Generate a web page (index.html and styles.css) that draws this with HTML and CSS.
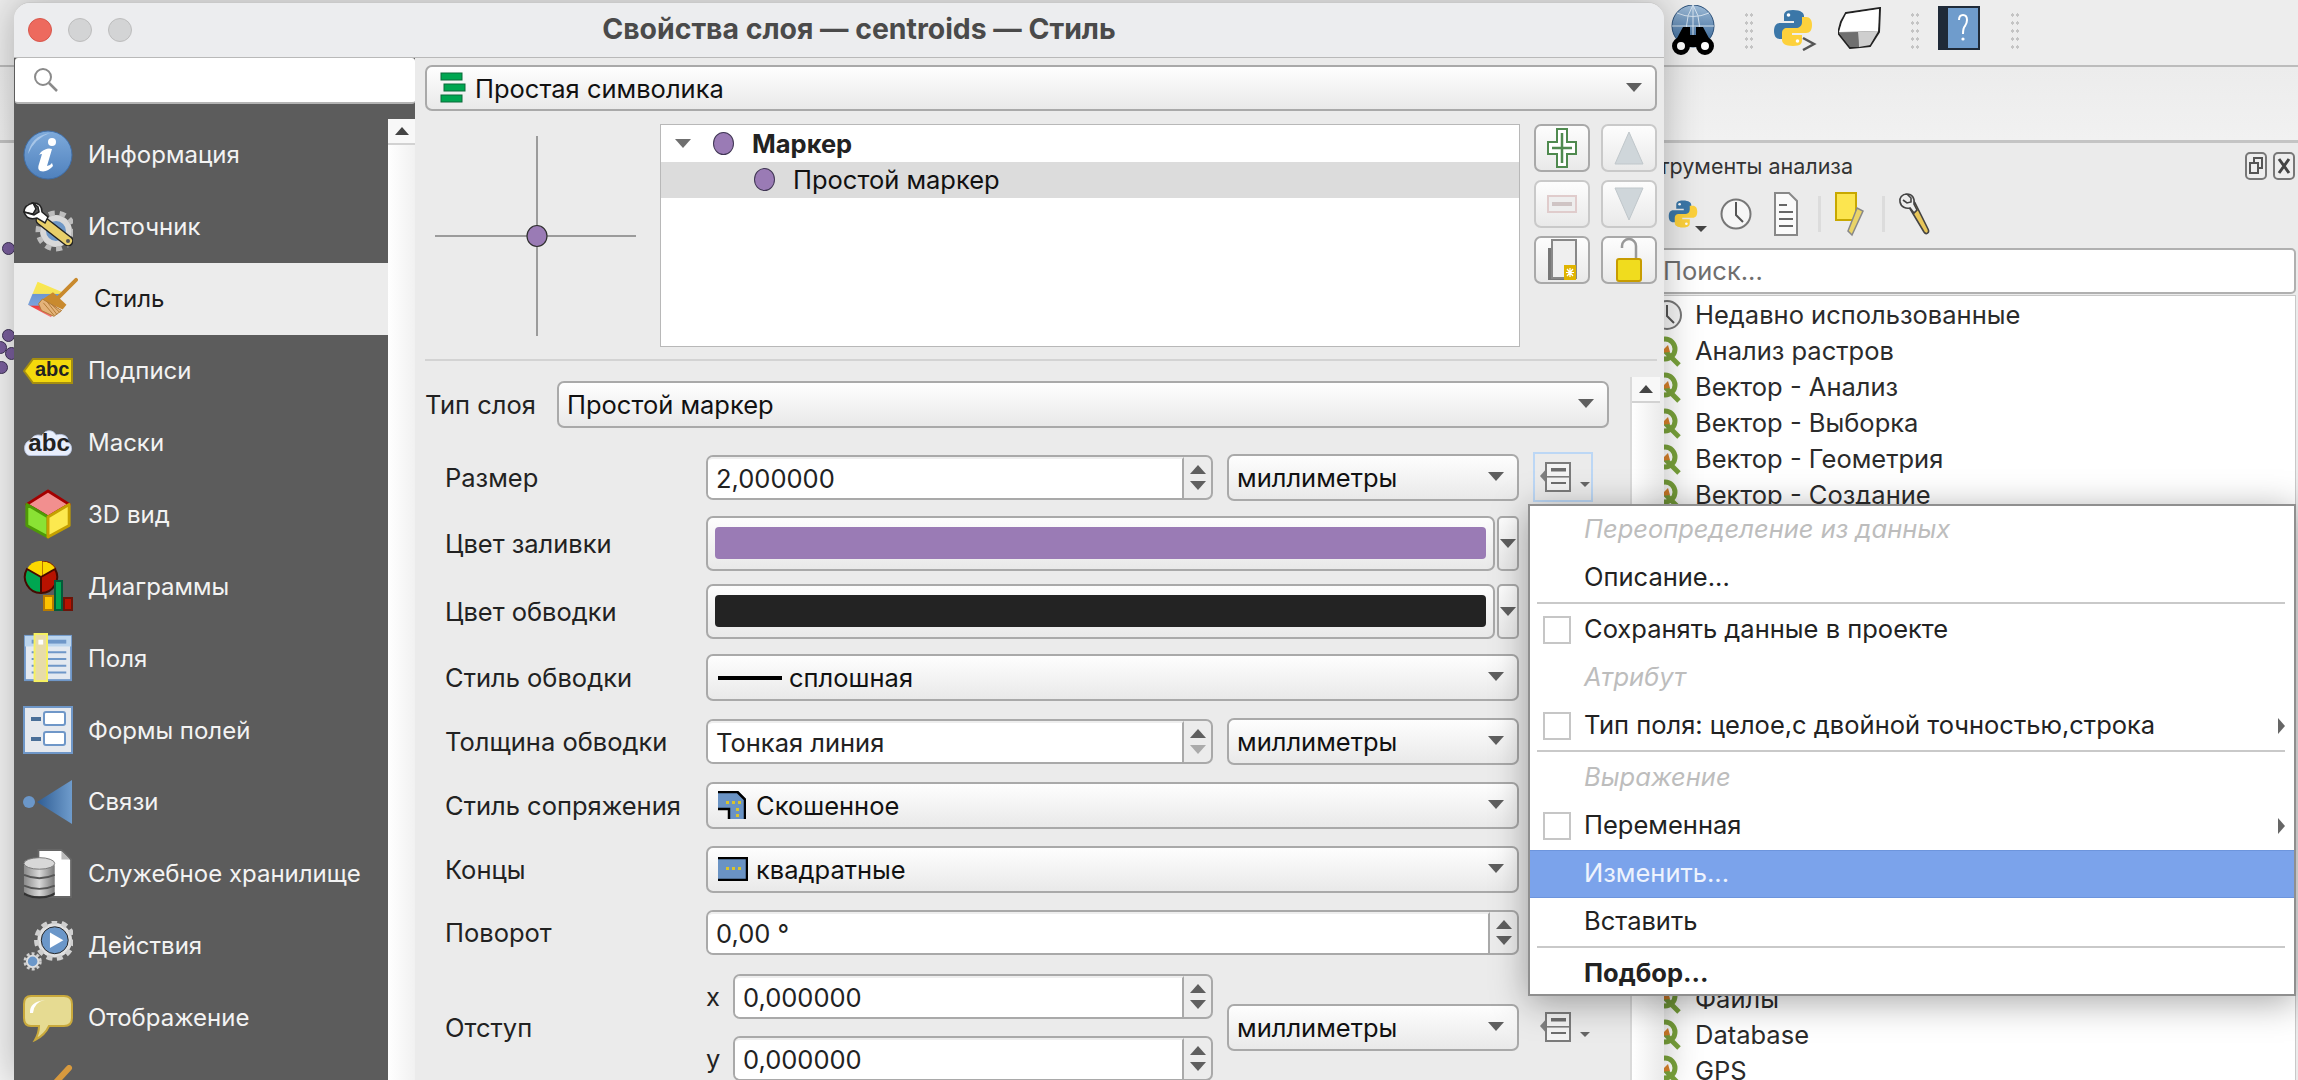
FILE: index.html
```html
<!DOCTYPE html>
<html lang="ru">
<head>
<meta charset="utf-8">
<title>Свойства слоя — centroids — Стиль</title>
<link rel="stylesheet" href="styles.css">
</head>
<body>
<svg class="defs" width="0" height="0">
  <defs>
    <linearGradient id="gInfo" x1="0" y1="0" x2="0" y2="1"><stop offset="0" stop-color="#7eaadb"/><stop offset="1" stop-color="#4f81bd"/></linearGradient>
    <linearGradient id="gFlag" x1="0" y1="0" x2="0" y2="1"><stop offset="0" stop-color="#fbe84a"/><stop offset=".33" stop-color="#f5e45a"/><stop offset=".36" stop-color="#6d97d3"/><stop offset=".66" stop-color="#7aa2da"/><stop offset=".69" stop-color="#ef3a3a"/><stop offset="1" stop-color="#f28080"/></linearGradient>
    <linearGradient id="gLink" x1="0" y1="0" x2="1" y2="0"><stop offset="0" stop-color="#2f5d94"/><stop offset="1" stop-color="#6f9ccc"/></linearGradient>
    <linearGradient id="gDb" x1="0" y1="0" x2="1" y2="0"><stop offset="0" stop-color="#8a8a8a"/><stop offset=".5" stop-color="#d8d8d8"/><stop offset="1" stop-color="#777"/></linearGradient>
    <linearGradient id="gGlobe" x1="0" y1="0" x2="0" y2="1"><stop offset="0" stop-color="#9dbad6"/><stop offset="1" stop-color="#2f5f91"/></linearGradient>
    <symbol id="override" viewBox="0 0 36 32">
      <path d="M9 6 1 15l8 9z" fill="#7f7f7f"/>
      <rect x="7" y="2" width="24" height="28" fill="#f4f4f4" stroke="#7c7c7c" stroke-width="2"/>
      <rect x="12" y="7" width="15" height="3.5" fill="#6e6e6e"/>
      <rect x="7" y="15" width="24" height="1.6" fill="#7c7c7c"/>
      <rect x="12" y="21" width="15" height="2" fill="#6e6e6e"/>
    </symbol>
    <symbol id="qgis" viewBox="0 0 32 32">
      <circle cx="14" cy="14" r="10" fill="none" stroke="#7aa33c" stroke-width="5"/>
      <path d="M13 15 28 30" stroke="#7aa33c" stroke-width="5"/>
      <path d="M9 18 17 10 19 17z" fill="#d9822b"/>
    </symbol>
    <symbol id="python" viewBox="0 0 40 40">
      <path d="M20 2c-8 0-9 3-9 6v5h10v2H7c-4 0-6 3-6 8s2 8 6 8h4v-5c0-4 3-6 6-6h9c3 0 5-2 5-5V8c0-3-3-6-11-6z" fill="#3b77a8"/>
      <path d="M20 38c8 0 9-3 9-6v-5H19v-2h14c4 0 6-3 6-8s-2-8-6-8h-4v5c0 4-3 6-6 6h-9c-3 0-5 2-5 5v7c0 3 3 6 11 6z" fill="#fdd13c"/>
      <circle cx="15.500" cy="7" r="1.800" fill="#fff"/><circle cx="24.500" cy="33" r="1.800" fill="#fff"/>
    </symbol>
  </defs>
</svg>

<div class="app">
  <div class="toolbar-main">
    <svg class="tb-globe" viewBox="0 0 50 50" width="50" height="50"><circle cx="25" cy="21" r="21" fill="url(#gGlobe)" stroke="#2a4f78"/><path d="M25 0v42M4 21h42M9 8q16 7 32 0M9 34q16-7 32 0M25 0q-13 21 0 42M25 0q13 21 0 42" stroke="#d3e0ec" fill="none"/><path d="M15 22h7v8h6v-8h7l8 15v5H7v-5z" fill="#000"/><circle cx="13" cy="41" r="6.500" fill="#fff" stroke="#000" stroke-width="5"/><circle cx="37" cy="41" r="6.500" fill="#fff" stroke="#000" stroke-width="5"/></svg>
    <span class="grip g1"></span>
    <svg class="tb-py" width="44" height="44" viewBox="0 0 44 44"><use href="#python" width="40" height="42"/><path d="M30 31l11 6-11 6" fill="none" stroke="#555" stroke-width="2.500"/></svg>
    <svg class="tb-shape" width="44" height="42" viewBox="0 0 44 42"><path d="M8 6 42 1 41 25 32 39 12 41 0 26 3 15z" fill="#8c8c8c" stroke="#222" stroke-width="2"/><path d="M8 7 41 2 40 24 1 25 4 15z" fill="#fff"/><path d="M20 25 40 24 32 38 21 40z" fill="#cfcfcf"/><path d="M1 26 20 25 21 40 12 40z" fill="#6f6f6f"/></svg>
    <span class="grip g2"></span>
    <svg class="tb-help" width="42" height="44" viewBox="0 0 42 44"><rect x="1" y="1" width="40" height="42" fill="#6f9ccc" stroke="#1f2a38" stroke-width="2"/><rect x="1" y="1" width="9" height="42" fill="#1f2a38"/><path d="M21 14q0-5 4-5t4 5q0 3-2 6-2 2-2 8" fill="none" stroke="#fff" stroke-width="2"/><circle cx="25" cy="33" r="1.600" fill="#fff"/></svg>
    <span class="grip g3"></span>
  </div>
  <div class="toolbar-second"></div>
  <div class="workspace">
    <div class="canvas">
      <span class="dot d1"></span><span class="dot d2"></span><span class="dot d3"></span><span class="dot d4"></span><span class="dot d5"></span>
    </div>
    <aside class="panel">
      <div class="panel-title">
        <span>Инструменты анализа</span>
        <span class="panel-btns">
          <svg width="22" height="28" viewBox="0 0 22 28"><rect x="1" y="1" width="20" height="26" rx="4" fill="#eee" stroke="#777" stroke-width="2"/><rect x="9" y="6" width="8" height="10" fill="none" stroke="#555" stroke-width="2"/><rect x="5" y="11" width="8" height="10" fill="#eee" stroke="#555" stroke-width="2"/></svg>
          <svg width="22" height="28" viewBox="0 0 22 28"><rect x="1" y="1" width="20" height="26" rx="4" fill="#eee" stroke="#777" stroke-width="2"/><path d="M6 7l10 14M16 7 6 21" stroke="#444" stroke-width="3"/></svg>
        </span>
      </div>
      <div class="panel-tools">
        <span class="pt-py"><svg width="30" height="42" viewBox="0 0 40 56"><use href="#python" width="40" height="56"/></svg><i class="tri-small"></i></span>
        <svg width="32" height="46" viewBox="0 0 32 46"><circle cx="16" cy="23" r="14.500" fill="#f6f6f6" stroke="#777" stroke-width="2"/><path d="M16 11v13l7 7" fill="none" stroke="#555" stroke-width="2"/></svg>
        <svg class="ml-8" width="26" height="46" viewBox="0 0 26 46"><path d="M2 2h14l8 8v34H2z" fill="#fafafa" stroke="#888" stroke-width="2"/><path d="M6 14h8M6 21h14M6 28h14M6 35h14" stroke="#666" stroke-width="2"/></svg>
        <i class="pt-sep ml-6"></i>
        <svg class="ml-1" width="30" height="46" viewBox="0 0 30 46"><rect x="1" y="2" width="20" height="27" fill="#fce54f" stroke="#c8a800" stroke-width="2"/><path d="M22 17l6 3-11 24-4-4z" fill="#ead467" stroke="#888" stroke-width="1.500"/></svg>
        <i class="pt-sep ml-4"></i>
        <svg width="32" height="46" viewBox="0 0 32 46"><path d="M11 16 26 41c2 3 6 1 4-3L17 12z" fill="#e8c65a" stroke="#444" stroke-width="1.600"/><path d="M9 3C4 3 1 7 2 11c1 5 6 7 10 6l4 5 3-3-3-6c1-6-2-10-7-10l4 4v4l-4 1-4-3" fill="#eee" stroke="#444" stroke-width="1.600"/></svg>
      </div>
      <div class="panel-search">Поиск...</div>
      <ul class="algo-list">
        <li><svg class="li-ico" width="32" height="32" viewBox="0 0 32 32"><circle cx="16" cy="16" r="14" fill="#f6f6f6" stroke="#777" stroke-width="2"/><path d="M16 6v11l7 7" fill="none" stroke="#555" stroke-width="2"/></svg>Недавно использованные</li>
        <li><svg class="li-ico" width="32" height="32"><use href="#qgis"/></svg>Анализ растров</li>
        <li><svg class="li-ico" width="32" height="32"><use href="#qgis"/></svg>Вектор - Анализ</li>
        <li><svg class="li-ico" width="32" height="32"><use href="#qgis"/></svg>Вектор - Выборка</li>
        <li><svg class="li-ico" width="32" height="32"><use href="#qgis"/></svg>Вектор - Геометрия</li>
        <li><svg class="li-ico" width="32" height="32"><use href="#qgis"/></svg>Вектор - Создание</li>
        <li class="after-menu"><svg class="li-ico" width="32" height="32"><use href="#qgis"/></svg>Файлы</li>
        <li><svg class="li-ico" width="32" height="32"><use href="#qgis"/></svg>Database</li>
        <li><svg class="li-ico" width="32" height="32"><use href="#qgis"/></svg>GPS</li>
      </ul>
    </aside>
  </div>
</div>

<section class="window">
  <header class="titlebar">
    <span class="lights"><i class="light red"></i><i class="light"></i><i class="light"></i></span>
    <h1 class="title">Свойства слоя — centroids — Стиль</h1>
  </header>
  <div class="win-body">
    <nav class="side">
      <div class="side-search"><svg width="26" height="26" viewBox="0 0 26 26"><circle cx="10" cy="10" r="8" fill="none" stroke="#8a8a8a" stroke-width="2"/><path d="M16 16l8 8" stroke="#8a8a8a" stroke-width="2.500"/></svg></div>
      <div class="side-main">
        <ul class="side-list">
          <li class="side-item">
            <svg class="ico" viewBox="0 0 50 50"><circle cx="25" cy="25" r="24" fill="url(#gInfo)" stroke="#3f6da6"/><path d="M5 24Q8 6 27 3 12 8 5 24z" fill="#a8c6e8"/><circle cx="29" cy="12" r="4" fill="#fff"/><path d="M18 22q6-5 11-3l-5 17q3 0 5-3l1 3q-6 7-13 5-3-2-1-7l3-10q-2 0-3 1z" fill="#fff"/></svg>
            <span>Информация</span></li>
          <li class="side-item">
            <svg class="ico" viewBox="0 0 50 50"><circle cx="33" cy="29" r="13" fill="#6d97c7" stroke="#d8d8d8" stroke-width="6"/><circle cx="33" cy="29" r="18" fill="none" stroke="#bdbdbd" stroke-width="5" stroke-dasharray="6 5"/><path d="M18 18 45 39" stroke="#222" stroke-width="11" stroke-linecap="round"/><path d="M18 18 45 39" stroke="#e8cf6a" stroke-width="8" stroke-linecap="round"/><path d="M10 1Q1 3 1 10l9 2 3-5z" fill="#fff" stroke="#222" stroke-width="1.500"/><path d="M1 10q3 9 13 6l8 5 3-6-6-5q0-9-9-9l5 4 1 5-5 3z" fill="#fff" stroke="#222" stroke-width="1.500"/><circle cx="45" cy="39" r="2" fill="#555"/></svg>
            <span>Источник</span></li>
          <li class="side-item active">
            <svg class="ico" viewBox="0 0 52 42"><path d="M10 3 36 14 24 40 0 27z" fill="url(#gFlag)"/><path d="M50 1 31 20" stroke="#c98a2e" stroke-width="4" stroke-linecap="round"/><path d="M26 14 40 27l-4 5L14 22z" fill="#c98a2e"/><path d="M15 21 35 33 27 39 14 33 11 26z" fill="#e4b37a" stroke="#b07a35"/><path d="M16 25 27 38M20 24l10 13M24 26l9 9" stroke="#b07a35"/></svg>
            <span>Стиль</span></li>
          <li class="side-item">
            <svg class="ico ico-wide" viewBox="0 0 50 26"><path d="M10 1H49V25H10L1 13z" fill="#f4d90c" stroke="#a58e10" stroke-width="2"/><text x="12" y="18" class="abc">abc</text></svg>
            <span>Подписи</span></li>
          <li class="side-item">
            <svg class="ico ico-wide" viewBox="0 0 56 32"><path d="M8 30C0 30-1 14 9 13 10 7 18 6 21 8 25 0 34 1 37 7 44 5 52 8 50 15 57 18 55 30 48 30z" fill="#e8eefc" stroke="#b8c5e0"/><text x="6" y="25" class="abc abc-lg">abc</text></svg>
            <span>Маски</span></li>
          <li class="side-item">
            <svg class="ico" viewBox="0 0 50 52"><path d="M25 2 47 16 25 29 3 16z" fill="#f28f8f" stroke="#a40000" stroke-width="3" stroke-linejoin="round"/><path d="M3 16 25 29V50L3 38z" fill="#8ae234" stroke="#4e9a06" stroke-width="3" stroke-linejoin="round"/><path d="M47 16 25 29V50L47 38z" fill="#fce94f" stroke="#c4a000" stroke-width="3" stroke-linejoin="round"/></svg>
            <span>3D вид</span></li>
          <li class="side-item">
            <svg class="ico" viewBox="0 0 50 50"><path d="M19 16V0a16 16 0 0 1 14 8z" fill="#fcd800" stroke="#7a1600"/><path d="M19 17 4 8a16 16 0 0 1 15-8z" fill="#fcd800"/><path d="M18 16 4 8A16 16 0 0 0 18 32z" fill="#00a651" stroke="#450a00" stroke-width="2"/><path d="M18 16 32 8A16 16 0 0 1 18 32z" fill="#b81200" stroke="#450a00" stroke-width="2"/><rect x="21" y="35" width="9" height="14" fill="#fcc200" stroke="#b87a00" stroke-width="2"/><rect x="32" y="20" width="7" height="29" fill="#00a651" stroke="#05593a" stroke-width="2"/><rect x="41" y="37" width="8" height="12" fill="#b81200" stroke="#6c1408" stroke-width="2"/></svg>
            <span>Диаграммы</span></li>
          <li class="side-item">
            <svg class="ico" viewBox="0 0 50 52"><rect x="1" y="3" width="48" height="46" fill="#e4e9f0" stroke="#6f97c8" stroke-width="2"/><rect x="1" y="3" width="48" height="11" fill="#bcd5ee"/><rect x="8" y="7" width="36" height="4" fill="#6f97c8"/><path d="M8 20h36M8 27h36M8 34h36M8 41h36" stroke="#6f97c8" stroke-width="2"/><rect x="11" y="1" width="13" height="49" fill="#e8dca8" stroke="#f6f15e" stroke-width="2"/><rect x="15" y="7" width="5" height="5" fill="#fff"/></svg>
            <span>Поля</span></li>
          <li class="side-item">
            <svg class="ico" viewBox="0 0 50 50"><rect x="1" y="2" width="48" height="46" fill="#e6e9ee" stroke="#6f97c8" stroke-width="2"/><rect x="8" y="12" width="10" height="4" fill="#4a6f98"/><rect x="8" y="32" width="10" height="4" fill="#4a6f98"/><rect x="21" y="7" width="21" height="13" rx="2" fill="#fff" stroke="#6f97c8" stroke-width="2"/><rect x="21" y="27" width="21" height="13" rx="2" fill="#fff" stroke="#6f97c8" stroke-width="2"/></svg>
            <span>Формы полей</span></li>
          <li class="side-item">
            <svg class="ico" viewBox="0 0 50 46"><circle cx="6" cy="23" r="6" fill="#6b97c9"/><path d="M14 23 49 1V45z" fill="url(#gLink)"/></svg>
            <span>Связи</span></li>
          <li class="side-item">
            <svg class="ico" viewBox="0 0 52 52"><path d="M16 1H40L50 11V50H16z" fill="#fff" stroke="#666" stroke-width="2"/><path d="M40 2 49 11H40z" fill="#bbb"/><rect x="1" y="15" width="32" height="34" rx="3" fill="url(#gDb)"/><ellipse cx="17" cy="15" rx="16" ry="6" fill="#d8d8d8" stroke="#777"/><path d="M1 27q16 7 32 0M1 38q16 7 32 0" fill="none" stroke="#555" stroke-width="2"/><path d="M1 45q16 9 32 0v3q-16 7-32 0z" fill="#333"/></svg>
            <span>Служебное хранилище</span></li>
          <li class="side-item">
            <svg class="ico" viewBox="0 0 52 52"><circle cx="33" cy="20" r="16" fill="#6b97c9" stroke="#e0e0e0" stroke-width="4"/><circle cx="33" cy="20" r="14" fill="none" stroke="#222" stroke-width="1"/><circle cx="33" cy="20" r="19" fill="none" stroke="#cfcfcf" stroke-width="5" stroke-dasharray="6 4.700"/><path d="M28 12 42 20 28 28z" fill="#fff"/><circle cx="10" cy="42" r="6" fill="#6b97c9" stroke="#e0e0e0" stroke-width="2"/><circle cx="10" cy="42" r="8" fill="none" stroke="#cfcfcf" stroke-width="3" stroke-dasharray="3 2.200"/></svg>
            <span>Действия</span></li>
          <li class="side-item">
            <svg class="ico" viewBox="0 0 50 46"><path d="M8 1H41Q49 1 49 9V23Q49 31 41 31H26Q22 40 12 45 16 38 16 31H8Q1 31 1 23V9Q1 1 8 1z" fill="#e6db92" stroke="#c9a93c" stroke-width="2"/><path d="M7 18Q6 7 22 5 11 7 10 18z" fill="#fff"/></svg>
            <span>Отображение</span></li>
          <li class="side-item">
            <svg class="ico" viewBox="0 0 50 50"><path d="M46 3 12 40" stroke="#d89a3e" stroke-width="6" stroke-linecap="round"/></svg>
          </li>
        </ul>
        <div class="side-scroll"><span class="sb-cap"><i class="tri-up"></i></span></div>
      </div>
    </nav>

    <main class="main">
      <div class="combo top-combo">
        <svg width="26" height="32" viewBox="0 0 26 32"><rect x="1" y="1" width="21" height="7" fill="#00a651" stroke="#0a6a3a"/><rect x="4" y="12" width="21" height="7" fill="#00a651" stroke="#0a6a3a"/><rect x="1" y="23" width="21" height="7" fill="#00a651" stroke="#0a6a3a"/></svg>
        <span class="combo-text">Простая символика</span><i class="tri-down"></i>
      </div>

      <div class="symbol-row">
        <div class="preview"><svg width="201" height="200" viewBox="0 0 201 200"><path d="M102 0V200M0 100H201" stroke="#9b9b9b" stroke-width="2"/><ellipse cx="102" cy="100" rx="10" ry="10.500" fill="#9a7bb5" stroke="#2f2f2f" stroke-width="1.200"/></svg></div>
        <div class="tree">
          <div class="tree-row"><i class="tree-arrow"></i><i class="mk mk-a"></i><b>Маркер</b></div>
          <div class="tree-row sel"><i class="mk mk-b"></i><span>Простой маркер</span></div>
        </div>
        <div class="sym-btns">
          <button class="sq"><svg width="30" height="42" viewBox="0 0 30 42"><path d="M10 2H20V15H29V27H20V40H10V27H1V15H10z" fill="#fff" stroke="#4f8a4f" stroke-width="2"/><path d="M15 6V36M5 21H25" stroke="#4f8a4f" stroke-width="2.500"/></svg></button>
          <button class="sq off"><svg width="30" height="34" viewBox="0 0 30 34"><path d="M15 1 29 33H1z" fill="#cfd6da" stroke="#c0c7cb"/></svg></button>
          <button class="sq off"><svg width="30" height="18" viewBox="0 0 30 18"><rect x="1" y="1" width="28" height="16" fill="#eee" stroke="#e0cccc" stroke-width="2"/><rect x="5" y="7" width="20" height="4" fill="#cfc4c4"/></svg></button>
          <button class="sq off"><svg width="30" height="34" viewBox="0 0 30 34"><path d="M15 33 29 1H1z" fill="#cfd6da" stroke="#c0c7cb"/></svg></button>
          <button class="sq"><svg width="30" height="44" viewBox="0 0 30 44"><rect x="1" y="10" width="20" height="32" fill="#777"/><rect x="5" y="2" width="24" height="38" fill="#efefef" stroke="#888" stroke-width="2"/><rect x="17" y="27" width="12" height="15" fill="#e0b400"/><path d="M23 30v9M19 34.500h8M20 31l6 7M26 31l-6 7" stroke="#fff" stroke-width="1.200"/></svg></button>
          <button class="sq"><svg width="28" height="46" viewBox="0 0 28 46"><path d="M21 21V9a7 7 0 0 0-14 0v2" fill="none" stroke="#999" stroke-width="2.500"/><rect x="2" y="22" width="24" height="22" rx="2" fill="#f0dc1e" stroke="#c79c00" stroke-width="2"/></svg></button>
        </div>
      </div>

      <hr class="sep">

      <div class="scroll-wrap">
        <div class="scroll-body">
          <div class="layer-type">
            <label class="lt-label">Тип слоя</label>
            <div class="combo lt-combo"><span class="combo-text">Простой маркер</span><i class="tri-down"></i></div>
          </div>
          <div class="form">
            <div class="row">
              <label>Размер</label>
              <div class="spin w-half"><span class="spin-val">2,000000</span><span class="spin-btns"><i class="tri-up"></i><i class="tri-down"></i></span></div>
              <div class="combo unit"><span class="combo-text">миллиметры</span><i class="tri-down"></i></div>
              <span class="ovr focus"><svg width="36" height="32"><use href="#override"/></svg><i class="tri-small"></i></span>
            </div>
            <div class="row">
              <label>Цвет заливки</label>
              <div class="color"><span class="swatch fill"></span></div>
              <span class="color-drop"><i class="tri-down"></i></span>
            </div>
            <div class="row">
              <label>Цвет обводки</label>
              <div class="color"><span class="swatch stroke"></span></div>
              <span class="color-drop"><i class="tri-down"></i></span>
            </div>
            <div class="row">
              <label>Стиль обводки</label>
              <div class="combo full"><i class="line-ico"></i><span class="combo-text">сплошная</span><i class="tri-down"></i></div>
            </div>
            <div class="row">
              <label>Толщина обводки</label>
              <div class="spin w-half"><span class="spin-val">Тонкая линия</span><span class="spin-btns"><i class="tri-up"></i><i class="tri-down dim"></i></span></div>
              <div class="combo unit"><span class="combo-text">миллиметры</span><i class="tri-down"></i></div>
            </div>
            <div class="row">
              <label>Стиль сопряжения</label>
              <div class="combo full">
                <svg class="join-ico" width="28" height="28" viewBox="0 0 28 28"><path d="M0 0H20L28 8V28H11V18H0z" fill="#6a93c4"/><path d="M0 1H19.500L27 8.500V28M0 18H11V28" fill="none" stroke="#000" stroke-width="2.500"/><path d="M8 10h3v3H8zM14 10h3v3h-3zM20 10h3v3h-3zM18 17h3v3h-3zM18 23h3v3h-3z" fill="#d9c42c"/></svg>
                <span class="combo-text">Скошенное</span><i class="tri-down"></i></div>
            </div>
            <div class="row">
              <label>Концы</label>
              <div class="combo full">
                <svg class="join-ico cap-ico" width="30" height="24" viewBox="0 0 30 24"><rect x="0" y="1" width="30" height="22" fill="#6a93c4"/><path d="M0 1H29V23H0" fill="none" stroke="#000" stroke-width="2.500"/><path d="M8 10h3v3H8zM14 10h3v3h-3zM20 10h3v3h-3z" fill="#d9c42c"/></svg>
                <span class="combo-text">квадратные</span><i class="tri-down"></i></div>
            </div>
            <div class="row">
              <label>Поворот</label>
              <div class="spin full"><span class="spin-val">0,00 °</span><span class="spin-btns"><i class="tri-up"></i><i class="tri-down"></i></span></div>
            </div>
            <div class="row offset-row">
              <label>Отступ</label>
              <div class="xy">
                <div class="xy-line"><span class="xy-label">x</span><div class="spin grow"><span class="spin-val">0,000000</span><span class="spin-btns"><i class="tri-up"></i><i class="tri-down"></i></span></div></div>
                <div class="xy-line"><span class="xy-label">y</span><div class="spin grow"><span class="spin-val">0,000000</span><span class="spin-btns"><i class="tri-up"></i><i class="tri-down"></i></span></div></div>
              </div>
              <div class="combo unit"><span class="combo-text">миллиметры</span><i class="tri-down"></i></div>
              <span class="ovr"><svg width="36" height="32"><use href="#override"/></svg><i class="tri-small"></i></span>
            </div>
          </div>
        </div>
        <div class="v-scroll"><span class="sb-cap"><i class="tri-up"></i></span></div>
      </div>
    </main>
  </div>
</section>

<div class="menu">
  <div class="mi off">Переопределение из данных</div>
  <div class="mi">Описание...</div>
  <hr class="msep">
  <div class="mi"><i class="chk"></i>Сохранять данные в проекте</div>
  <div class="mi off">Атрибут</div>
  <div class="mi"><i class="chk"></i>Тип поля: целое,с двойной точностью,строка<i class="sub"></i></div>
  <hr class="msep">
  <div class="mi off">Выражение</div>
  <div class="mi"><i class="chk"></i>Переменная<i class="sub"></i></div>
  <div class="mi hl">Изменить...</div>
  <div class="mi">Вставить</div>
  <hr class="msep">
  <div class="mi strong">Подбор...</div>
</div>
</body>
</html>
```

FILE: styles.css
```css
* { box-sizing: border-box; }
html, body { margin: 0; padding: 0; width: 2298px; height: 1080px; overflow: hidden; }
body { position: relative; background: #ececec; font-family: Inter, "Noto Sans", sans-serif; font-size: 25.500px; color: #1d1d1d; }
.defs { position: absolute; }
i { display: block; font-style: normal; }
ul { list-style: none; margin: 0; padding: 0; }

/* triangles */
.tri-down, .tri-up { width: 0; height: 0; border-left: 8px solid transparent; border-right: 8px solid transparent; }
.tri-down { border-top: 9px solid #5f5f5f; }
.tri-up { border-bottom: 9px solid #5f5f5f; }
.tri-down.dim { border-top-color: #ababab; }
.tri-small { width: 0; height: 0; border-left: 6px solid transparent; border-right: 6px solid transparent; border-top: 6px solid #666; }

/* background application */
.app { width: 2298px; height: 1080px; display: flex; flex-direction: column; overflow: hidden; }
.toolbar-main { height: 67px; flex: none; display: flex; align-items: flex-start; padding: 5px 0 0 1668px; background: #ededed; border-bottom: 2px solid #bcbcbc; }
.tb-globe { flex: none; }
.grip { width: 9px; height: 40px; margin-top: 6px; background-image: radial-gradient(circle, #c4c4c4 1.500px, transparent 1.700px); background-size: 5px 8px; }
.g1 { margin-left: 26px; }
.tb-py { margin-left: 20px; margin-top: 2px; }
.tb-shape { margin-left: 21px; margin-top: 2px; }
.g2 { margin-left: 28px; }
.tb-help { margin-left: 19px; margin-top: 1px; }
.g3 { margin-left: 30px; }
.toolbar-second { height: 76px; flex: none; background: linear-gradient(#ececec, #f1f1f1); border-bottom: 3px solid #c4c4c4; }
.workspace { flex: 1; display: flex; min-height: 0; }
.canvas { width: 1615px; flex: none; position: relative; background: #f4f4f4; }
.dot { position: absolute; width: 13px; height: 13px; border-radius: 50%; background: #7a5f9e; border: 1px solid #3d3255; }
.d1 { left: 2px; top: 99px; }
.d2 { left: 2px; top: 186px; }
.d3 { left: 5px; top: 204px; }
.d4 { left: -5px; top: 218px; }
.d5 { left: -6px; top: 198px; }
.panel { flex: 1; display: flex; flex-direction: column; background: #ebebeb; padding-top: 8px; min-width: 0; }
.panel-title { height: 30px; display: flex; align-items: center; justify-content: space-between; padding: 0 3px 0 3px; font-size: 21.500px; color: #333; }
.panel-btns { display: flex; gap: 6px; }
.panel-tools { height: 56px; margin-top: 5px; display: flex; align-items: center; gap: 13px; padding-left: 53px; }
.pt-py { display: flex; align-items: flex-end; }
.pt-py .tri-small { margin-left: -3px; margin-bottom: 3px; border-top-color: #444; }
.pt-sep { width: 3px; height: 36px; background: #dcdcdc; }
.ml-8 { margin-left: 8px; }
.ml-6 { margin-left: 6px; }
.ml-4 { margin-left: 4px; }
.ml-1 { margin-left: 1px; }
.panel-search { height: 46px; margin: 6px 2px 0 5px; padding: 0 0 2px 41px; display: flex; align-items: center; background: #fff; border: 2px solid #b0b0b0; border-radius: 5px; color: #6f6f6f; }
.algo-list { flex: 1; margin: 1px 2px 0 5px; padding-top: 1px; background: #fff; border: 1px solid #c8c8c8; border-bottom: 0; overflow: hidden; }
.algo-list li { height: 35.900px; display: flex; align-items: center; gap: 12px; padding-left: 30px; white-space: nowrap; color: #2b2b2b; }
.li-ico { flex: none; }
.algo-list .after-menu { margin-top: 468px; }

/* dialog window */
.window { position: absolute; left: 14px; top: 2px; width: 1650px; height: 1078px; display: flex; flex-direction: column; background: #ebebeb; border-radius: 16px 16px 0 0; box-shadow: 0 0 38px rgba(0,0,0,.28); border-top: 1px solid #c9c9c9; }
.titlebar { height: 55px; flex: none; display: flex; align-items: center; padding-left: 14px; background: #ecedef; border-radius: 16px 16px 0 0; border-bottom: 1px solid #b9b9b9; }
.lights { display: flex; gap: 16px; }
.light { width: 24px; height: 24px; border-radius: 50%; background: #d3d4d5; border: 1px solid #bdbdbd; }
.light.red { background: #ed6a5e; border-color: #d8574c; }
.title { flex: 1; margin: 0; padding: 0 78px 2px 0; text-align: center; font-size: 28.400px; font-weight: 700; color: #4a4a4a; line-height: 1; white-space: nowrap; }
.win-body { flex: 1; display: flex; min-height: 0; overflow: hidden; }

/* sidebar */
.side { width: 401px; flex: none; display: flex; flex-direction: column; background: #5c5c5c; }
.side-search { height: 46px; flex: none; display: flex; align-items: center; padding-left: 18px; background: #fff; border-bottom: 2px solid #b4b4b4; border-radius: 3px; margin-left: 1px; }
.side-main { flex: 1; display: flex; padding-top: 15px; min-height: 0; }
.side-list { width: 374px; flex: none; }
.side-item { height: 71.900px; display: flex; align-items: center; gap: 15px; padding-left: 9px; color: #f3f3f3; white-space: nowrap; font-size: 24px; }
.side-item .ico { width: 50px; height: 50px; flex: none; }
.side-item.active { background: #ececec; color: #1d1d1d; padding-left: 14px; }
.side-item.active span { margin-left: 1px; }
.abc { font: 700 20px "Liberation Sans", sans-serif; fill: #222; }
.abc-lg { font-size: 27px; }
.side-scroll { flex: 1; background: linear-gradient(90deg, #fff, #f1f1f1); }
.sb-cap { display: flex; justify-content: center; align-items: center; height: 26px; background: #f8f8f8; border-bottom: 2px solid #d2d2d2; }
.sb-cap .tri-up { border-left-width: 7px; border-right-width: 7px; border-bottom-width: 8px; border-bottom-color: #444; }

/* main */
.main { flex: 1; display: flex; flex-direction: column; min-width: 0; padding: 7px 7px 0 10px; }
.combo { display: flex; align-items: center; height: 47px; padding: 0 13px 0 8px; border: 2px solid #a9a9a9; border-radius: 7px; background: linear-gradient(#fefefe, #e9e9e9); color: #111; white-space: nowrap; }
.combo-text { flex: 1; }
.combo > .tri-down { flex: none; margin-top: -2px; }
.top-combo { flex: none; height: 46px; padding-left: 13px; gap: 9px; }
.symbol-row { flex: none; height: 223px; margin-top: 13px; display: flex; }
.preview { width: 235px; flex: none; padding: 12px 0 0 10px; }
.tree { flex: 1; background: #fff; border: 1px solid #b8b8b8; }
.tree-row { display: flex; align-items: center; height: 37px; }
.tree-row b { font-weight: 700; color: #222; margin-left: 18px; }
.tree-row.sel { height: 36px; padding-bottom: 2px; background: #dcdcdc; padding-left: 93px; color: #111; }
.tree-row.sel span { margin-left: 18px; }
.tree-arrow { margin-left: 14px; width: 0; height: 0; border-left: 8px solid transparent; border-right: 8px solid transparent; border-top: 9px solid #6f6f6f; }
.mk { width: 21px; height: 23px; border-radius: 50%; background: #9a7bb5; border: 1px solid #403654; flex: none; }
.mk-a { margin-left: 22px; }
.sym-btns { flex: none; margin-left: 14px; display: grid; grid-template-columns: 56px 56px; grid-auto-rows: 48px; gap: 8px 11px; align-content: start; }
.sq { display: flex; align-items: center; justify-content: center; padding: 0; border: 2px solid #a9a9a9; border-radius: 7px; background: linear-gradient(#fdfdfd, #e9e9e9); }
.sq.off { border-color: #c9c9c9; }
.sep { flex: none; width: 100%; height: 2px; margin: 12px 0 0; border: 0; background: #d3d3d3; }
.scroll-wrap { flex: 1; min-height: 0; display: flex; margin: 16px -7px 0 0; }
.scroll-body { flex: 1; min-width: 0; }
.layer-type { display: flex; align-items: center; margin-top: 4px; height: 47px; }
.lt-label { width: 132px; color: #222; }
.lt-combo { width: 1052px; padding-left: 8px; }
.v-scroll { width: 30px; flex: none; background: linear-gradient(90deg, #fff, #ececec); margin-right: 4px; border-left: 2px solid #dadada; }
.form { display: grid; grid-template-rows: 56px 77px 58px 75px 52px 76px 52px 74px 200px; margin-top: 21px; padding-left: 20px; }
.row { display: flex; align-items: center; min-width: 0; }
.row > label { width: 261px; flex: none; color: #222; white-space: nowrap; }
.spin { position: relative; display: flex; height: 45px; border: 2px solid #a9a9a9; border-radius: 7px; background: #ececec; }
.spin-val { flex: 1; background: #fff; display: flex; align-items: center; padding-left: 8px; color: #222; border-radius: 5px 0 0 5px; border-top: 2px solid #eee; border-right: 2px solid #aaa; white-space: nowrap; }
.spin-btns { width: 27px; flex: none; display: flex; flex-direction: column; align-items: center; justify-content: center; gap: 7px; }
.w-half { width: 507px; flex: none; }
.full { width: 813px; flex: none; }
.grow { flex: 1; min-width: 0; }
.unit { width: 292px; flex: none; margin-left: 14px; padding-left: 8px; }
.ovr { width: 60px; height: 50px; margin-left: 14px; flex: none; display: flex; align-items: center; padding-left: 4px; border: 2px solid transparent; }
.ovr.focus { border-color: #bcd7f5; }
.ovr .tri-small { margin: 14px 0 0 5px; border-left-width: 5px; border-right-width: 5px; border-top-width: 5px; }
.color { width: 789px; height: 55px; flex: none; padding: 9px 7px; border: 2px solid #a9a9a9; border-radius: 7px; background: linear-gradient(#fdfdfd, #e9e9e9); }
.swatch { display: block; height: 32px; border-radius: 4px; }
.fill { background: #9a7bb5; }
.stroke { background: #232323; }
.color-drop { width: 22px; height: 55px; flex: none; margin-left: 2px; display: flex; align-items: center; justify-content: center; border: 2px solid #a9a9a9; border-radius: 5px; background: linear-gradient(#fdfdfd, #e9e9e9); }
.line-ico { width: 64px; height: 4px; flex: none; background: #000; margin: 0 7px 0 2px; }
.join-ico { flex: none; margin: 0 10px 0 2px; }
.cap-ico { margin-right: 8px; }
.offset-row { align-items: flex-start; }
.offset-row > label { margin-top: 43px; }
.offset-row .unit { margin-top: 35px; }
.offset-row .ovr { margin-top: 33px; }
.xy { width: 507px; flex: none; display: flex; flex-direction: column; gap: 17px; margin-top: 5px; }
.xy-line { display: flex; align-items: center; }
.xy-label { width: 27px; flex: none; color: #222; }

/* popup menu */
.menu { position: absolute; left: 1528px; top: 504px; width: 768px; display: flex; flex-direction: column; background: #fff; border: 2px solid #8f8f8f; box-shadow: 0 6px 34px rgba(0,0,0,.35); }
.mi { position: relative; height: 48px; display: flex; align-items: center; padding: 0 0 3px 54px; color: #222; white-space: nowrap; }
.mi.off { color: #bdbdbd; font-style: italic; }
.mi.hl { background: #7ba3eb; color: #eef3fd; border-top: 1px solid #6d95dd; border-bottom: 1px solid #6d95dd; }
.mi.strong { height: 44px; font-weight: 700; color: #222; padding-bottom: 0; }
.chk { position: absolute; left: 13px; top: 10px; width: 28px; height: 28px; background: #fff; border: 2px solid #c6c6c6; }
.sub { position: absolute; right: 9px; top: 16px; width: 0; height: 0; border-top: 8px solid transparent; border-bottom: 8px solid transparent; border-left: 7px solid #666; }
.msep { width: 748px; height: 2px; margin: 0 0 2px 7px; border: 0; background: #c9c9c9; flex: none; }
```
